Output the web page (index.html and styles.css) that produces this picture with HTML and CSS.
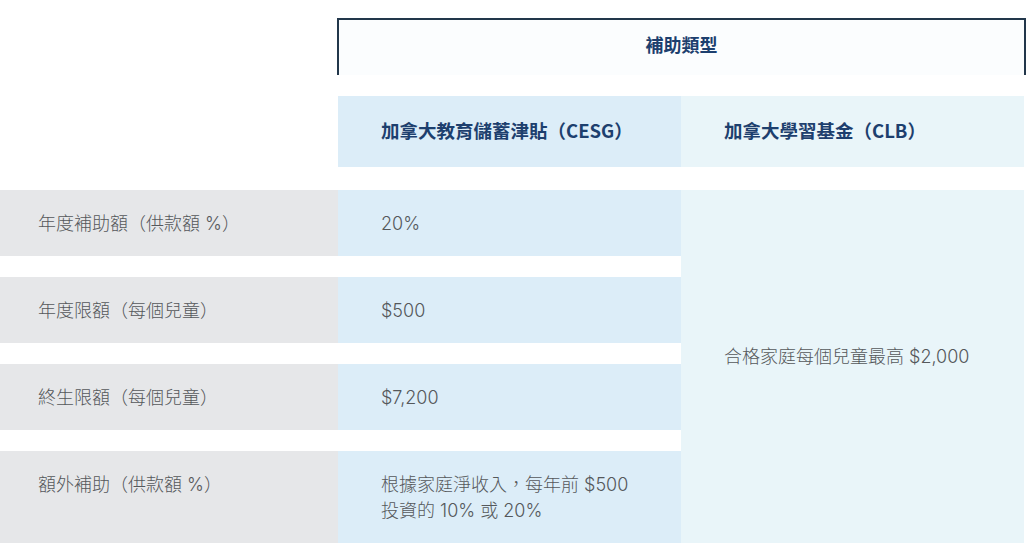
FILE: index.html
```html
<!DOCTYPE html>
<html lang="zh-Hant">
<head>
<meta charset="utf-8">
<title>補助類型</title>
<link rel="stylesheet" href="styles.css">
</head>
<body>
<div class="table">
  <div class="group-row">
    <div class="spacer"></div>
    <div class="group">補助類型</div>
  </div>
  <div class="col-heads">
    <div class="spacer"></div>
    <div class="ch cesg">加拿大教育儲蓄津貼（CESG）</div>
    <div class="ch clb">加拿大學習基金（CLB）</div>
  </div>
  <div class="body">
    <div class="rows">
      <div class="row"><div class="label">年度補助額（供款額 %）</div><div class="val">20%</div></div>
      <div class="row"><div class="label">年度限額（每個兒童）</div><div class="val">$500</div></div>
      <div class="row"><div class="label">終生限額（每個兒童）</div><div class="val">$7,200</div></div>
      <div class="row"><div class="label">額外補助（供款額 %）</div><div class="val">根據家庭淨收入，每年前 $500<br>投資的 10% 或 20%</div></div>
    </div>
    <div class="clb-cell">合格家庭每個兒童最高 $2,000</div>
  </div>
</div>
</body>
</html>
```
FILE: styles.css
```css
* { box-sizing: border-box; }
html, body { margin: 0; padding: 0; background: #ffffff; }
body {
  font-family: Inter, "Noto Sans CJK TC", sans-serif;
  font-weight: 300;
  font-size: 18px;
  color: #55585b;
}
.table { width: 1035px; }

.group-row { display: flex; margin-top: 18px; }
.group-row .spacer { width: 337px; flex: none; }
.group {
  width: 689px;
  height: 57px;
  border: 2px solid #22374b;
  border-bottom: none;
  text-align: center;
  padding-top: 11px;
  line-height: 26px;
  font-family: "Noto Sans CJK TC", sans-serif;
  font-weight: 700;
  font-size: 18px;
  color: #1d3f6e;
  background: #fbfdfe;
}

.col-heads { display: flex; margin-top: 21px; }
.col-heads .spacer { width: 338px; flex: none; }
.ch {
  height: 71px;
  display: flex;
  align-items: center;
  padding-left: 43px;
  padding-bottom: 3px;
  font-family: "Noto Sans CJK TC", sans-serif;
  font-weight: 700;
  font-size: 18.5px;
  color: #1d3f6e;
}
.cesg { width: 343px; background: #dcedf8; }
.clb { width: 343px; background: #e9f5f9; }

.body { display: flex; margin-top: 23px; }
.rows { width: 681px; display: flex; flex-direction: column; gap: 21px; }
.row { display: flex; }
.label, .val {
  padding: 21px 0 19px;
  line-height: 26px;
}
.label { width: 338px; background: #e6e7e9; padding-left: 38px; }
.val { width: 343px; background: #dcedf8; padding-left: 43px; }
.clb-cell {
  width: 343px;
  background: #e9f5f9;
  display: flex;
  align-items: center;
  padding-left: 43px;
  padding-bottom: 20px;
  line-height: 26px;
}
```
